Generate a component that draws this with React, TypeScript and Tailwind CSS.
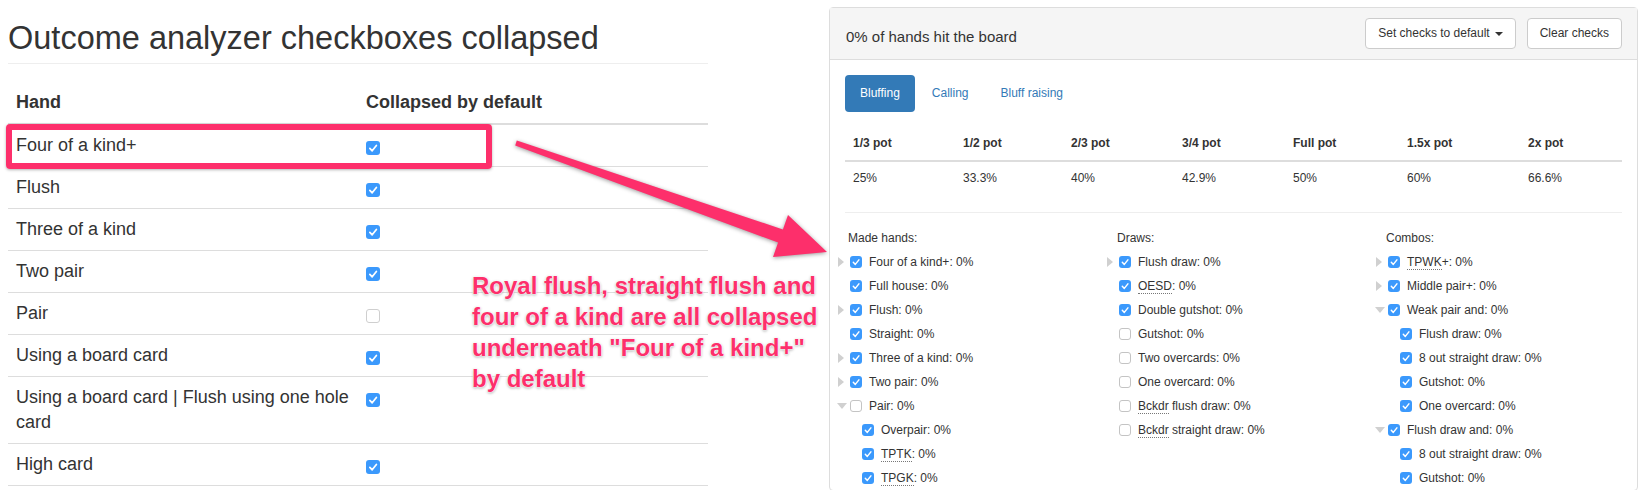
import React from 'react'

type Item = {
  label: React.ReactNode
  checked?: boolean
  tri?: 'right' | 'down'
  nested?: boolean
}

const Abbr = ({ children }: { children: React.ReactNode }) => (
  <span className="border-b border-dotted border-[#777]">{children}</span>
)

const CheckMark = () => (
  <svg viewBox="0 0 12 12" className="h-full w-full">
    <path d="M3.3 6.3l2 2.1 3.6-4.5" fill="none" stroke="#fff" strokeWidth="1.5" strokeLinecap="round" strokeLinejoin="round" />
  </svg>
)

const Check = ({ checked }: { checked?: boolean }) =>
  checked ? (
    <span className="block h-3 w-3 shrink-0 rounded-[3px] bg-[#3b99fc]">
      <CheckMark />
    </span>
  ) : (
    <span className="block h-3 w-3 shrink-0 rounded-[3px] border border-[#c4c4c4] bg-white" />
  )

const BigCheck = ({ checked }: { checked?: boolean }) =>
  checked ? (
    <span className="mt-2 block h-[14px] w-[14px] rounded-[3px] bg-[#3b99fc]">
      <CheckMark />
    </span>
  ) : (
    <span className="mt-2 block h-[14px] w-[14px] rounded-[3px] border border-[#cfcfcf] bg-white" />
  )

const Tri = ({ dir }: { dir?: 'right' | 'down' }) => {
  if (dir === 'right')
    return (
      <svg width="6" height="10" viewBox="0 0 6 10">
        <path d="M0 0L6 5L0 10Z" fill="#d0d0d0" />
      </svg>
    )
  if (dir === 'down')
    return (
      <svg width="10" height="6" viewBox="0 0 10 6" className="-ml-px">
        <path d="M0 0H10L5 6Z" fill="#d0d0d0" />
      </svg>
    )
  return null
}

const madeHands: Item[] = [
  { label: 'Four of a kind+', tri: 'right', checked: true },
  { label: 'Full house', checked: true },
  { label: 'Flush', tri: 'right', checked: true },
  { label: 'Straight', checked: true },
  { label: 'Three of a kind', tri: 'right', checked: true },
  { label: 'Two pair', tri: 'right', checked: true },
  { label: 'Pair', tri: 'down', checked: false },
  { label: 'Overpair', nested: true, checked: true },
  { label: <Abbr>TPTK</Abbr>, nested: true, checked: true },
  { label: <Abbr>TPGK</Abbr>, nested: true, checked: true },
]

const draws: Item[] = [
  { label: 'Flush draw', tri: 'right', checked: true },
  { label: <Abbr>OESD</Abbr>, checked: true },
  { label: 'Double gutshot', checked: true },
  { label: 'Gutshot' },
  { label: 'Two overcards' },
  { label: 'One overcard' },
  { label: <><Abbr>Bckdr</Abbr> flush draw</> },
  { label: <><Abbr>Bckdr</Abbr> straight draw</> },
]

const combos: Item[] = [
  { label: <><Abbr>TPWK</Abbr>+</>, tri: 'right', checked: true },
  { label: 'Middle pair+', tri: 'right', checked: true },
  { label: 'Weak pair and', tri: 'down', checked: true },
  { label: 'Flush draw', nested: true, checked: true },
  { label: '8 out straight draw', nested: true, checked: true },
  { label: 'Gutshot', nested: true, checked: true },
  { label: 'One overcard', nested: true, checked: true },
  { label: 'Flush draw and', tri: 'down', checked: true },
  { label: '8 out straight draw', nested: true, checked: true },
  { label: 'Gutshot', nested: true, checked: true },
]

const handRows = [
  { hand: 'Four of a kind+', checked: true },
  { hand: 'Flush', checked: true },
  { hand: 'Three of a kind', checked: true },
  { hand: 'Two pair', checked: true },
  { hand: 'Pair', checked: false },
  { hand: 'Using a board card', checked: true },
  { hand: 'Using a board card | Flush using one hole card', checked: true },
  { hand: 'High card', checked: true },
]

const pots = [
  ['1/3 pot', '25%'],
  ['1/2 pot', '33.3%'],
  ['2/3 pot', '40%'],
  ['3/4 pot', '42.9%'],
  ['Full pot', '50%'],
  ['1.5x pot', '60%'],
  ['2x pot', '66.6%'],
]

const CheckColumn = ({ title, items }: { title: string; items: Item[] }) => (
  <div>
    <div className="flex h-6 items-center pl-[3px]">{title}</div>
    {items.map((item, i) => (
      <div key={i} className={`-ml-[7px] flex h-6 items-center ${item.nested ? 'pl-3' : ''}`}>
        <span className="flex w-3 shrink-0 items-center">
          <Tri dir={item.tri} />
        </span>
        <Check checked={item.checked} />
        <span className="ml-[7px] whitespace-nowrap">
          {item.label}: 0%
        </span>
      </div>
    ))}
  </div>
)

export default function App() {
  return (
    <div className="relative h-[490px] w-[1648px] overflow-hidden bg-white font-['Liberation_Sans',Arial,sans-serif] text-[#333]">
      <div className="flex items-start">
        {/* Left: settings table */}
        <div className="ml-2 w-[700px]">
          <h1 className="mt-[21px] border-b border-[#eee] pb-[7px] text-[32.5px] leading-[35px] font-normal">
            Outcome analyzer checkboxes collapsed
          </h1>
          <div className="mt-[18px] text-[18px] leading-[25px]">
            <div className="flex border-b-2 border-[#ddd] font-bold">
              <div className="w-[350px] px-2 py-2">Hand</div>
              <div className="px-2 py-2">Collapsed by default</div>
            </div>
            {handRows.map((r, i) => (
              <div key={i} className="flex border-b border-[#ddd]">
                <div className="w-[350px] px-2 py-2">{r.hand}</div>
                <div className="px-2 py-2">
                  <BigCheck checked={r.checked} />
                </div>
              </div>
            ))}
          </div>
        </div>

        {/* Right: outcome panel */}
        <div className="mt-[7px] ml-[121px] w-[809px] rounded border border-[#ddd] text-[12px] leading-[17px]">
          <div className="flex items-center justify-between border-b border-[#ddd] bg-[#f5f5f5] py-[10px] pr-[15px] pl-[16px]">
            <div className="mt-[6px] text-[15px] leading-[21px]">0% of hands hit the board</div>
            <div className="flex gap-[11px]">
              <button className="flex h-[31px] items-center rounded border border-[#ccc] bg-white px-3 text-[12px] text-[#333]">
                Set checks to default
                <svg width="8" height="4" viewBox="0 0 8 4" className="ml-[5px]">
                  <path d="M0 0H8L4 4Z" fill="#333" />
                </svg>
              </button>
              <button className="h-[31px] rounded border border-[#ccc] bg-white px-3 text-[12px] text-[#333]">
                Clear checks
              </button>
            </div>
          </div>

          <div className="px-[15px] pt-[15px]">
            <div className="flex gap-[2px]">
              <span className="rounded bg-[#337ab7] px-[15px] py-[10px] text-white">Bluffing</span>
              <span className="px-[15px] py-[10px] text-[#337ab7]">Calling</span>
              <span className="px-[15px] py-[10px] text-[#337ab7]">Bluff raising</span>
            </div>

            <div className="mt-[15px]">
              <div className="grid grid-cols-[110px_108px_111px_111px_114px_121px_1fr] border-b-2 border-[#ddd] font-bold">
                {pots.map(p => (
                  <div key={p[0]} className="p-2">{p[0]}</div>
                ))}
              </div>
              <div className="grid grid-cols-[110px_108px_111px_111px_114px_121px_1fr]">
                {pots.map(p => (
                  <div key={p[0]} className="p-2">{p[1]}</div>
                ))}
              </div>
            </div>

            <div className="mt-[17px] border-t border-[#eee]" />

            <div className="mt-[13px] grid grid-cols-[269px_269px_1fr]">
              <CheckColumn title="Made hands:" items={madeHands} />
              <CheckColumn title="Draws:" items={draws} />
              <CheckColumn title="Combos:" items={combos} />
            </div>
          </div>
        </div>
      </div>

      {/* Annotation overlays */}
      <div className="pointer-events-none absolute top-[124px] left-[6px] h-[45px] w-[486px] rounded-[4px] border-[6px] border-[#fd2f6b] shadow-[0_1px_3px_rgba(0,0,0,0.3)]" />

      <svg className="pointer-events-none absolute top-0 left-0 drop-shadow-[0_1px_2px_rgba(0,0,0,0.4)]" width="1648" height="490">
        <polygon
          points="516.8,140.6 782.9,229.4 788,215 827,252 773,257 778.1,242.6 515.2,145.4"
          fill="#fd2f6b"
          strokeLinejoin="round"
        />
      </svg>

      <div className="pointer-events-none absolute top-[270px] left-[472px] text-[24px] leading-[31px] font-bold whitespace-nowrap text-[#fd2f6b] [text-shadow:0_0_1px_#fff,0_0_2px_#fff,0_0_2px_#fff,0_1px_3px_rgba(0,0,0,0.45)]">
        Royal flush, straight flush and
        <br />
        four of a kind are all collapsed
        <br />
        underneath "Four of a kind+"
        <br />
        by default
      </div>
    </div>
  )
}
